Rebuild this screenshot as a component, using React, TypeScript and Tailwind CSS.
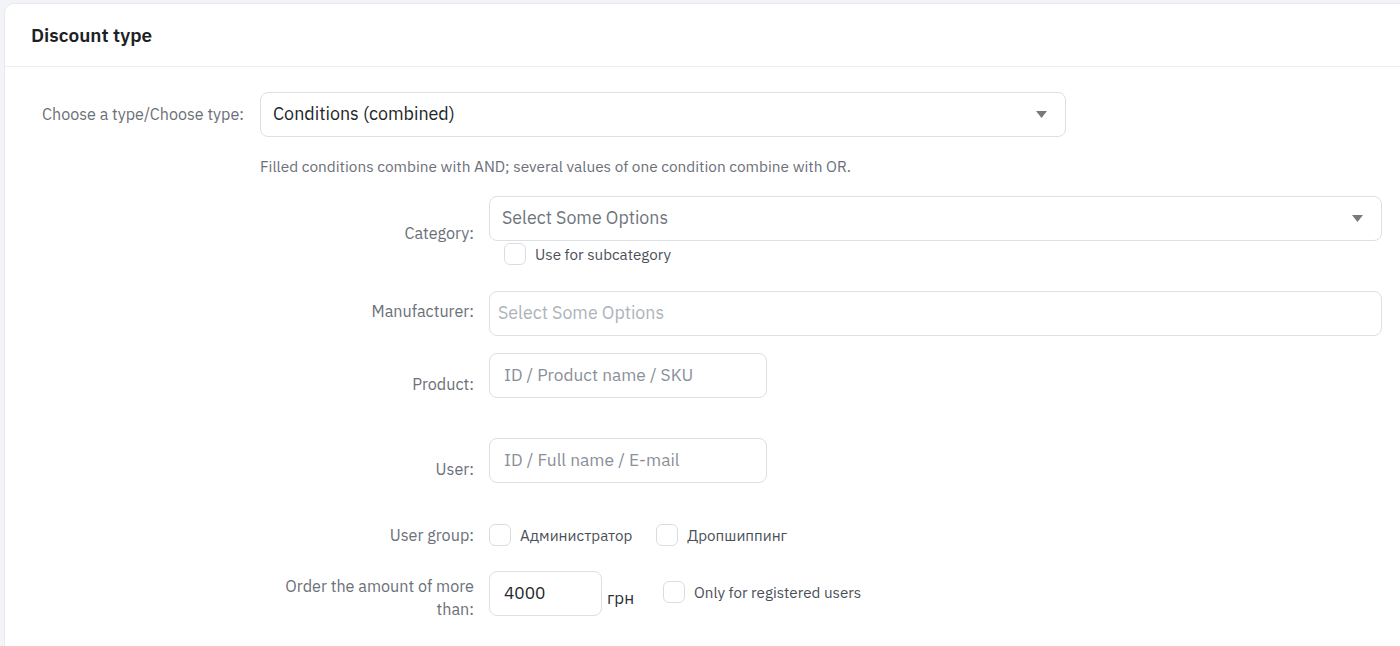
const FONT = "font-['IBM_Plex_Sans','Noto_Sans','Liberation_Sans',sans-serif]";

function Caret() {
  return (
    <svg width="11" height="7" viewBox="0 0 11 7" className="shrink-0">
      <path d="M0 0h11L5.5 7z" fill="#7a7a7a" />
    </svg>
  );
}

function Checkbox({ label, className = "" }: { label: string; className?: string }) {
  return (
    <label className={`flex items-center gap-[9px] ${className}`}>
      <span className="h-[22px] w-[22px] shrink-0 rounded-[6px] border border-[#d9dde3] bg-white" />
      <span className="text-[15.2px] text-[#4a5058]">{label}</span>
    </label>
  );
}

function Row({
  label,
  pt,
  children,
  className = "",
}: {
  label: React.ReactNode;
  pt: string;
  children: React.ReactNode;
  className?: string;
}) {
  return (
    <div className={`flex items-start ${className}`}>
      <div className={`w-[214px] shrink-0 text-right text-[16.2px] leading-[22px] text-[#6b7079] ${pt}`}>
        {label}
      </div>
      <div className="ml-[15px] min-w-0 flex-1">{children}</div>
    </div>
  );
}

export default function App() {
  return (
    <div className={`h-screen overflow-hidden bg-[#f3f4f7] pl-[4px] pt-[3px] ${FONT}`}>
      <div className="-mr-6 h-[700px] rounded-tl-[10px] border border-[#e8eaee] bg-white">
        <div className="flex h-[63px] items-center border-b border-[#eceef1] px-[26px]">
          <h2 className="text-[19px] font-semibold text-[#1d2125]">Discount type</h2>
        </div>

        <div className="pt-[25px]">
          <div className="flex items-center">
            <div className="w-[239px] shrink-0 text-right text-[16.1px] text-[#6b7079]">
              Choose a type/Choose type:
            </div>
            <div className="ml-[16px] flex h-[45px] w-[806px] items-center justify-between rounded-[8px] border border-[#dcdfe4] pl-[12px] pr-[18px] text-[17.9px] text-[#212529]">
              <span>Conditions (combined)</span>
              <Caret />
            </div>
          </div>

          <div className="ml-[255px]">
            <p className="mt-[19px] text-[15.4px] leading-[20px] text-[#6b7079]">
              Filled conditions combine with AND; several values of one condition combine with OR.
            </p>

            <Row label="Category:" pt="pt-[26px]" className="mt-[20px]">
              <div className="flex h-[45px] w-[893px] items-center justify-between rounded-[8px] border border-[#dcdfe4] pl-[12px] pr-[18px] text-[17.8px] text-[#6f757d]">
                <span>Select Some Options</span>
                <Caret />
              </div>
              <Checkbox label="Use for subcategory" className="ml-[15px] mt-[2px]" />
            </Row>

            <Row label="Manufacturer:" pt="pt-[9px]" className="mt-[25px]">
              <div className="flex h-[45px] w-[893px] items-center rounded-[8px] border border-[#dcdfe4] pl-[8px] text-[17.8px] text-[#adb3ba]">
                Select Some Options
              </div>
            </Row>

            <Row label="Product:" pt="pt-[20px]" className="mt-[17px]">
              <div className="flex h-[45px] w-[278px] items-center rounded-[8px] border border-[#dcdfe4] pl-[14px] text-[17.3px] text-[#8a9099]">
                ID / Product name / SKU
              </div>
            </Row>

            <Row label="User:" pt="pt-[20px]" className="mt-[40px]">
              <div className="flex h-[45px] w-[278px] items-center rounded-[8px] border border-[#dcdfe4] pl-[14px] text-[17.4px] text-[#8a9099]">
                ID / Full name / E-mail
              </div>
            </Row>

            <Row label="User group:" pt="pt-[0px]" className="mt-[41px]">
              <div className="flex items-center">
                <Checkbox label="Администратор" />
                <Checkbox label="Дропшиппинг" className="ml-[24px]" />
              </div>
            </Row>

            <Row
              label={
                <>
                  Order the amount of more
                  <br />
                  than:
                </>
              }
              pt="pt-[3px] leading-[23px]"
              className="mt-[24px]"
            >
              <div className="flex items-start">
                <div className="flex h-[45px] w-[113px] items-center rounded-[8px] border border-[#dcdfe4] pl-[14px] text-[17.3px] text-[#212529]">
                  4000
                </div>
                <span className="ml-[5px] pt-[15px] text-[16.9px] text-[#2b3036]">грн</span>
                <Checkbox label="Only for registered users" className="ml-[29px] mt-[10px]" />
              </div>
            </Row>
          </div>
        </div>
      </div>
    </div>
  );
}
